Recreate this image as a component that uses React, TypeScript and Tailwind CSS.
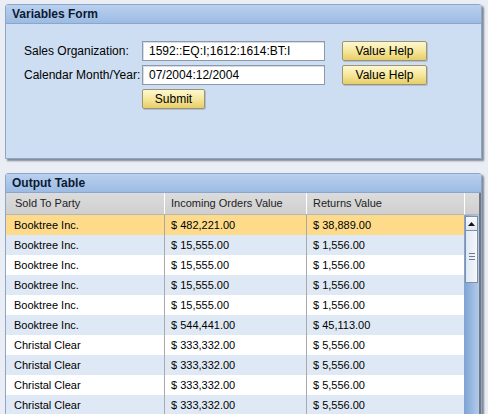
import { ReactNode } from "react";

interface OrderRow {
    party: string;
    incoming: string;
    returns: string;
}

const rows: OrderRow[] = [
    { party: "Booktree Inc.", incoming: "$ 482,221.00", returns: "$ 38,889.00" },
    { party: "Booktree Inc.", incoming: "$ 15,555.00", returns: "$ 1,556.00" },
    { party: "Booktree Inc.", incoming: "$ 15,555.00", returns: "$ 1,556.00" },
    { party: "Booktree Inc.", incoming: "$ 15,555.00", returns: "$ 1,556.00" },
    { party: "Booktree Inc.", incoming: "$ 15,555.00", returns: "$ 1,556.00" },
    { party: "Booktree Inc.", incoming: "$ 544,441.00", returns: "$ 45,113.00" },
    { party: "Christal Clear", incoming: "$ 333,332.00", returns: "$ 5,556.00" },
    { party: "Christal Clear", incoming: "$ 333,332.00", returns: "$ 5,556.00" },
    { party: "Christal Clear", incoming: "$ 333,332.00", returns: "$ 5,556.00" },
    { party: "Christal Clear", incoming: "$ 333,332.00", returns: "$ 5,556.00" },
];

// Panel with the blue tray header
const Tray = ({ title, children }: { title: string; children: ReactNode }) => (
    <div className="border border-[#8ea6c6] rounded-t-[3px] shadow-[2px_2px_2px_rgba(40,50,70,0.55)]">
        <div className="h-[19px] flex items-center pl-[6px] bg-gradient-to-b from-[#b9d0ee] to-[#9dbbe3] border-b border-[#8aa6cc] text-[12px] font-bold text-[#0b1a33]">
            {title}
        </div>
        {children}
    </div>
);

const YellowButton = ({ label, width }: { label: string; width: string }) => (
    <button
        className={`${width} h-[20px] rounded-[2px] border border-[#9d9474] bg-gradient-to-b from-[#fdf7d2] via-[#f6e79b] to-[#e6cd68] text-[12px] text-black leading-none shadow-[1px_1px_0_rgba(0,0,0,0.15)]`}
    >
        {label}
    </button>
);

const TextField = ({ value }: { value: string }) => (
    <div className="w-[183px] h-[20px] flex items-center pl-[6px] bg-white border border-[#8d99ab] shadow-[inset_1px_1px_0_#d8dde5] text-[12px] text-black">
        {value}
    </div>
);

const App = () => {
    return (
        <div
            className="w-[488px] h-[414px] overflow-hidden bg-[#eaeef4] pt-[4px] pl-[5px] pr-[6px]"
            style={{ fontFamily: '"Liberation Sans", Arial, sans-serif' }}
        >
            <Tray title="Variables Form">
                <div className="h-[134px] bg-[#cedef2] pt-[17px] pl-[18px] text-[12px] text-black">
                    <div className="grid grid-cols-[118px_200px_85px] gap-y-[4px] items-center">
                        <span>Sales Organization:</span>
                        <TextField value="1592::EQ:I;1612:1614:BT:I" />
                        <YellowButton label="Value Help" width="w-[85px]" />
                        <span className="whitespace-nowrap">Calendar Month/Year:</span>
                        <TextField value="07/2004:12/2004" />
                        <YellowButton label="Value Help" width="w-[85px]" />
                        <span />
                        <YellowButton label="Submit" width="w-[63px]" />
                    </div>
                </div>
            </Tray>

            <div className="mt-[14px]">
                <Tray title="Output Table">
                    <div className="flex bg-white text-[11px] text-black">
                        <div className="flex-1">
                            <div className="grid grid-cols-[159px_142px_155px] h-[22px] bg-gradient-to-b from-[#dcdcdc] to-[#cfcfcf] border-b border-[#b7b7b7]">
                                <div className="flex items-center pl-[9px] border-r border-white text-[#222]">Sold To Party</div>
                                <div className="flex items-center pl-[6px] border-r border-white text-[#222]">Incoming Orders Value</div>
                                <div className="flex items-center pl-[6px] text-[#222]">Returns Value</div>
                            </div>
                            {rows.map((row, i) => (
                                <div
                                    key={i}
                                    className={`grid grid-cols-[159px_142px_155px] h-[20px] ${
                                        i === 0 ? "bg-[#fedb8a]" : i % 2 === 1 ? "bg-[#dfe9f5]" : "bg-white"
                                    }`}
                                >
                                    <div className="flex items-center pl-[8px] border-r border-[#a9a9a9]">{row.party}</div>
                                    <div className="flex items-center pl-[6px] border-r border-[#a9a9a9]">{row.incoming}</div>
                                    <div className="flex items-center pl-[6px]">{row.returns}</div>
                                </div>
                            ))}
                        </div>

                        {/* vertical scrollbar */}
                        <div className="w-[17px] flex flex-col bg-[#d3d3d3] border-r-2 border-[#6f7680]">
                            <div className="h-[22px] bg-gradient-to-b from-[#dcdcdc] to-[#cfcfcf] border-l border-white border-b border-b-[#b7b7b7]" />
                            <div className="flex-1 flex flex-col px-[1px] pt-[1px] bg-gradient-to-r from-[#7ea3d4] to-[#b3cbea]">
                                <div className="h-[15px] flex items-center justify-center bg-gradient-to-b from-[#f7f9fc] to-[#dfe6ef] border border-[#7f8fa6]">
                                    <svg width="7" height="4" viewBox="0 0 7 4">
                                        <path d="M0 4 L3.5 0 L7 4 Z" fill="#111" />
                                    </svg>
                                </div>
                                <div className="h-[52px] flex flex-col items-center justify-center gap-[2px] bg-gradient-to-r from-[#dfe8f4] to-[#f5f8fc] border border-[#7f8fa6] border-t-0">
                                    <div className="w-[6px] h-px bg-[#6b7a90]" />
                                    <div className="w-[6px] h-px bg-[#6b7a90]" />
                                    <div className="w-[6px] h-px bg-[#6b7a90]" />
                                </div>
                            </div>
                        </div>
                    </div>
                </Tray>
            </div>
        </div>
    );
};

export default App;
